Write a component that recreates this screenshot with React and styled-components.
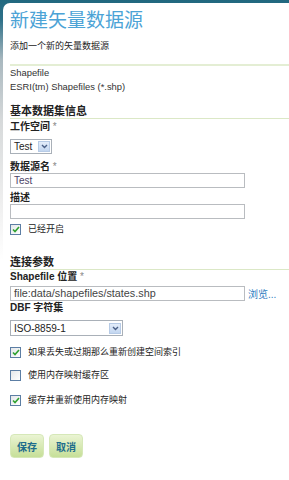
import React from "react";
import styled, { createGlobalStyle } from "styled-components";

const GlobalStyle = createGlobalStyle`
  html, body {
    margin: 0;
    padding: 0;
    background: #ffffff;
  }
  body {
    font-family: "Liberation Sans", "Noto Sans CJK SC", sans-serif;
    color: #333;
  }
`;

const Frame = styled.div`
  min-height: 480px;
  box-sizing: border-box;
  padding: 3px 0 0 3px;
  background: linear-gradient(
    180deg,
    #21687f 0px,
    #2f7189 20px,
    #a9b8bf 60px,
    #d6d9da 120px,
    #eeeeee 200px,
    #ffffff 260px
  );
`;

const Panel = styled.div`
  min-height: 477px;
  box-sizing: border-box;
  background: #ffffff;
  border-top-left-radius: 7px;
  padding: 6px 0 0 7px;
`;

const Title = styled.h1`
  margin: 0;
  font-size: 19px;
  line-height: 24px;
  font-weight: normal;
  color: #4ba3d6;
`;

const Subtitle = styled.p`
  margin: 7px 0 0;
  font-size: 9px;
  line-height: 12px;
  color: #222;
`;

const Divider = styled.div`
  margin-top: 12px;
  border-top: 2px solid #e4eed4;
`;

const Info = styled.div`
  font-size: 9.4px;
  line-height: 14px;
  color: #333;
`;

const SectionHead = styled.h2`
  margin: ${(p) => p.$top}px 0 0;
  font-size: 11px;
  line-height: 13px;
  font-weight: bold;
  color: #222;
  border-bottom: 1px solid #dbe8c6;
`;

const Label = styled.div`
  margin-top: ${(p) => p.$top}px;
  font-size: 10px;
  line-height: 12px;
  font-weight: bold;
  color: #222;

  span {
    color: #888;
    font-weight: normal;
  }
`;

const TextBox = styled.div`
  margin-top: ${(p) => p.$top || 0}px;
  width: 235px;
  height: 15px;
  box-sizing: border-box;
  border: 1px solid #b9bcc0;
  padding: 0 3px;
  font-size: ${(p) => p.$size || 10}px;
  line-height: 13px;
  color: ${(p) => p.$color || "#444"};
  background: #fff;
`;

const Row = styled.div`
  display: flex;
  align-items: center;
  gap: 3px;
`;

const Link = styled.a`
  font-size: 10px;
  color: #2f7cbf;
  margin-top: ${(p) => p.$top || 0}px;
  text-decoration: none;
`;

const SelectBox = styled.div`
  margin-top: ${(p) => p.$top}px;
  width: ${(p) => p.$w}px;
  height: ${(p) => p.$h}px;
  box-sizing: border-box;
  border: 1px solid #a9b0b8;
  display: flex;
  align-items: center;
  justify-content: space-between;
  padding: 0 1px 0 3px;
  font-size: 10px;
  color: #222;
  background: #fff;
`;

const Arrow = styled.span`
  width: 12px;
  height: 11px;
  box-sizing: border-box;
  border: 1px solid #b7cbe6;
  background: linear-gradient(180deg, #e3edfa, #c3d6f0);
  display: flex;
  align-items: center;
  justify-content: center;
`;

const Check = styled.label`
  margin-top: ${(p) => p.$top}px;
  display: flex;
  align-items: center;
  gap: 7px;
  font-size: 9px;
  line-height: 12px;
  color: #222;
`;

const Box = styled.span`
  width: 11px;
  height: 11px;
  box-sizing: border-box;
  border: 1px solid #5c7ea4;
  background: linear-gradient(135deg, #e4e7ea, #ffffff);
  display: flex;
  align-items: center;
  justify-content: center;
`;

const Buttons = styled.div`
  margin-top: 28px;
  display: flex;
  gap: 5px;
`;

const Button = styled.button`
  width: 34px;
  height: 24px;
  padding: 0;
  border: 1px solid #d6e8b8;
  border-radius: 4px;
  background: linear-gradient(180deg, #eaf4d3, #c6df98);
  color: #1e6d8c;
  font-family: "Liberation Sans", "Noto Sans CJK SC", sans-serif;
  font-size: 10px;
  font-weight: bold;
`;

const Chevron = () => (
  <svg width="7" height="5" viewBox="0 0 7 5">
    <path d="M1 1 L3.5 3.5 L6 1" fill="none" stroke="#4a5f86" strokeWidth="1.4" />
  </svg>
);

const Tick = () => (
  <svg width="8" height="7" viewBox="0 0 8 7">
    <path d="M1 3.5 L3 5.5 L7 1" fill="none" stroke="#2fa12f" strokeWidth="1.6" />
  </svg>
);

const CheckItem = ({ top, checked, children }) => (
  <Check $top={top}>
    <Box>{checked && <Tick />}</Box>
    {children}
  </Check>
);

export default function App() {
  return (
    <>
      <GlobalStyle />
      <Frame>
        <Panel>
          <Title>新建矢量数据源</Title>
          <Subtitle>添加一个新的矢量数据源</Subtitle>
          <Divider />
          <Info>
            <div>Shapefile</div>
            <div>ESRI(tm) Shapefiles (*.shp)</div>
          </Info>

          <SectionHead $top={11}>基本数据集信息</SectionHead>
          <Label $top={2}>
            工作空间 <span>*</span>
          </Label>
          <SelectBox $top={6} $w={42} $h={15}>
            Test
            <Arrow>
              <Chevron />
            </Arrow>
          </SelectBox>
          <Label $top={7}>
            数据源名 <span>*</span>
          </Label>
          <TextBox $color="#4c4466">Test</TextBox>
          <Label $top={4}>描述</Label>
          <TextBox />
          <CheckItem top={4} checked>
            已经开启
          </CheckItem>

          <SectionHead $top={21}>连接参数</SectionHead>
          <Label $top={1}>
            Shapefile 位置 <span>*</span>
          </Label>
          <Row>
            <TextBox $top={3} $size={10.8}>
              file:data/shapefiles/states.shp
            </TextBox>
            <Link href="#" $top={3}>
              浏览...
            </Link>
          </Row>
          <Label $top={1}>DBF 字符集</Label>
          <SelectBox $top={6} $w={113} $h={16}>
            ISO-8859-1
            <Arrow>
              <Chevron />
            </Arrow>
          </SelectBox>

          <CheckItem top={10} checked>
            如果丢失或过期那么重新创建空间索引
          </CheckItem>
          <CheckItem top={11}>使用内存映射缓存区</CheckItem>
          <CheckItem top={13} checked>
            缓存并重新使用内存映射
          </CheckItem>

          <Buttons>
            <Button>保存</Button>
            <Button>取消</Button>
          </Buttons>
        </Panel>
      </Frame>
    </>
  );
}
